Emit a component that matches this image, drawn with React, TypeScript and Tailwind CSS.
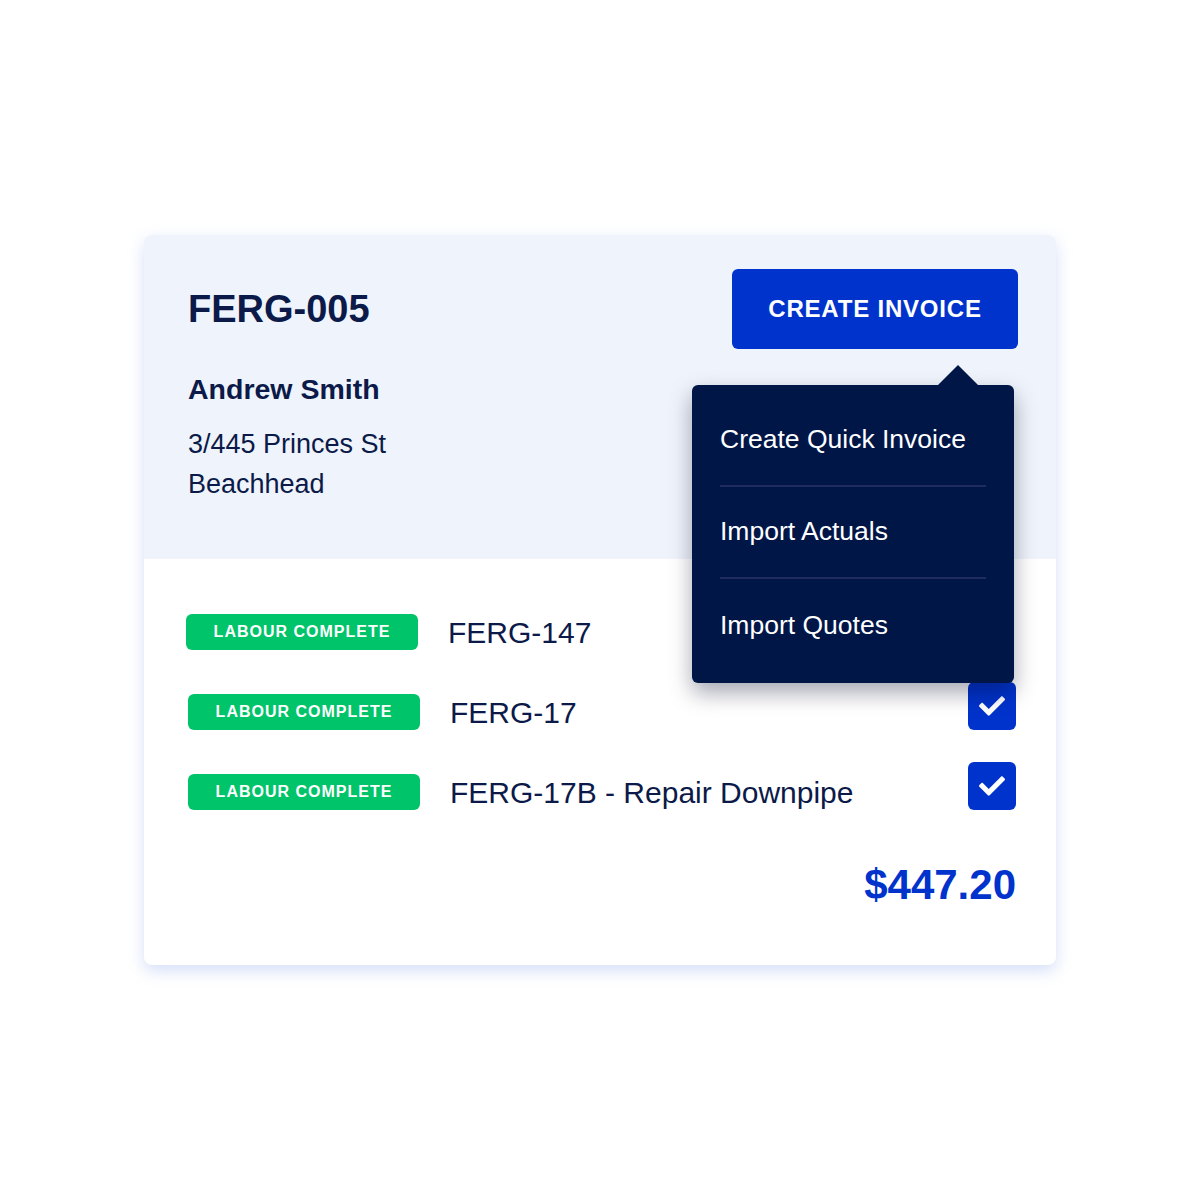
import { FaCheck } from "react-icons/fa";

const rows = [
  { label: "FERG-147", checked: false, shift: true },
  { label: "FERG-17", checked: true, shift: false },
  { label: "FERG-17B - Repair Downpipe", checked: true, shift: false },
];

const menuItems = ["Create Quick Invoice", "Import Actuals", "Import Quotes"];

const App = () => {
  return (
    <div
      className="min-h-screen w-full bg-white flex items-center justify-center"
      style={{ fontFamily: '"Liberation Sans", Arial, sans-serif' }}
    >
      <div className="relative w-[912px] h-[730px] rounded-[8px] bg-white shadow-[0_6px_16px_rgba(200,212,245,0.75)] flex flex-col">
        {/* Header */}
        <div className="h-[324px] bg-[#eff3fb] rounded-t-[8px] pl-[44px] pr-[38px] pt-[34px]">
          <div className="flex items-center justify-between h-[80px]">
            <h1 className="text-[38px] font-bold text-[#0b1a48] leading-none">FERG-005</h1>
            <button className="w-[286px] h-[80px] rounded-[6px] bg-[#0033cc] text-white text-[24px] font-bold tracking-[0.8px]">
              CREATE INVOICE
            </button>
          </div>
          <div className="mt-[26px] text-[28.5px] font-bold text-[#0b1a48] leading-none">Andrew Smith</div>
          <div className="mt-[20px] text-[27px] leading-[40px] text-[#0b1a48]">
            <div>3/445 Princes St</div>
            <div>Beachhead</div>
          </div>
        </div>

        {/* Line items */}
        <div className="flex-1 px-[40px] pt-[55px]">
          <div className="flex flex-col gap-[44px]">
            {rows.map((row, i) => (
              <div key={i} className={`flex items-center h-[36px] ${row.shift ? "-ml-[2px]" : ""}`}>
                <span className="ml-[4px] w-[232px] h-[36px] rounded-[6px] bg-[#00c46a] text-white text-[16px] font-bold tracking-[1px] flex items-center justify-center">
                  LABOUR COMPLETE
                </span>
                <span className="ml-[30px] text-[30px] text-[#0b1a48]">{row.label}</span>
                {row.checked && (
                  <span className="ml-auto relative -top-[6px] w-[48px] h-[48px] rounded-[6px] bg-[#0033cc] flex items-center justify-center">
                    <FaCheck className="text-white text-[26px]" />
                  </span>
                )}
              </div>
            ))}
          </div>
          <div className="mt-[54px] text-right text-[42px] font-bold text-[#0033cc] leading-none">
            $447.20
          </div>
        </div>

        {/* Dropdown menu */}
        <div className="absolute left-[548px] top-[150px] w-[322px] h-[298px] rounded-[6px] bg-[#001647] shadow-[0_10px_22px_rgba(0,10,40,0.35)] px-[28px] pt-[10px]">
          <div className="absolute -top-[20px] left-[246px] w-0 h-0 border-l-[20px] border-r-[20px] border-b-[20px] border-l-transparent border-r-transparent border-b-[#001647]" />
          {menuItems.map((item, i) => (
            <div
              key={i}
              className={`h-[92px] flex items-center text-[26.5px] text-white ${i < menuItems.length - 1 ? "border-b-2 border-[#1e2d5e]" : "pt-[2px]"}`}
            >
              {item}
            </div>
          ))}
        </div>
      </div>
    </div>
  );
};

export default App;
